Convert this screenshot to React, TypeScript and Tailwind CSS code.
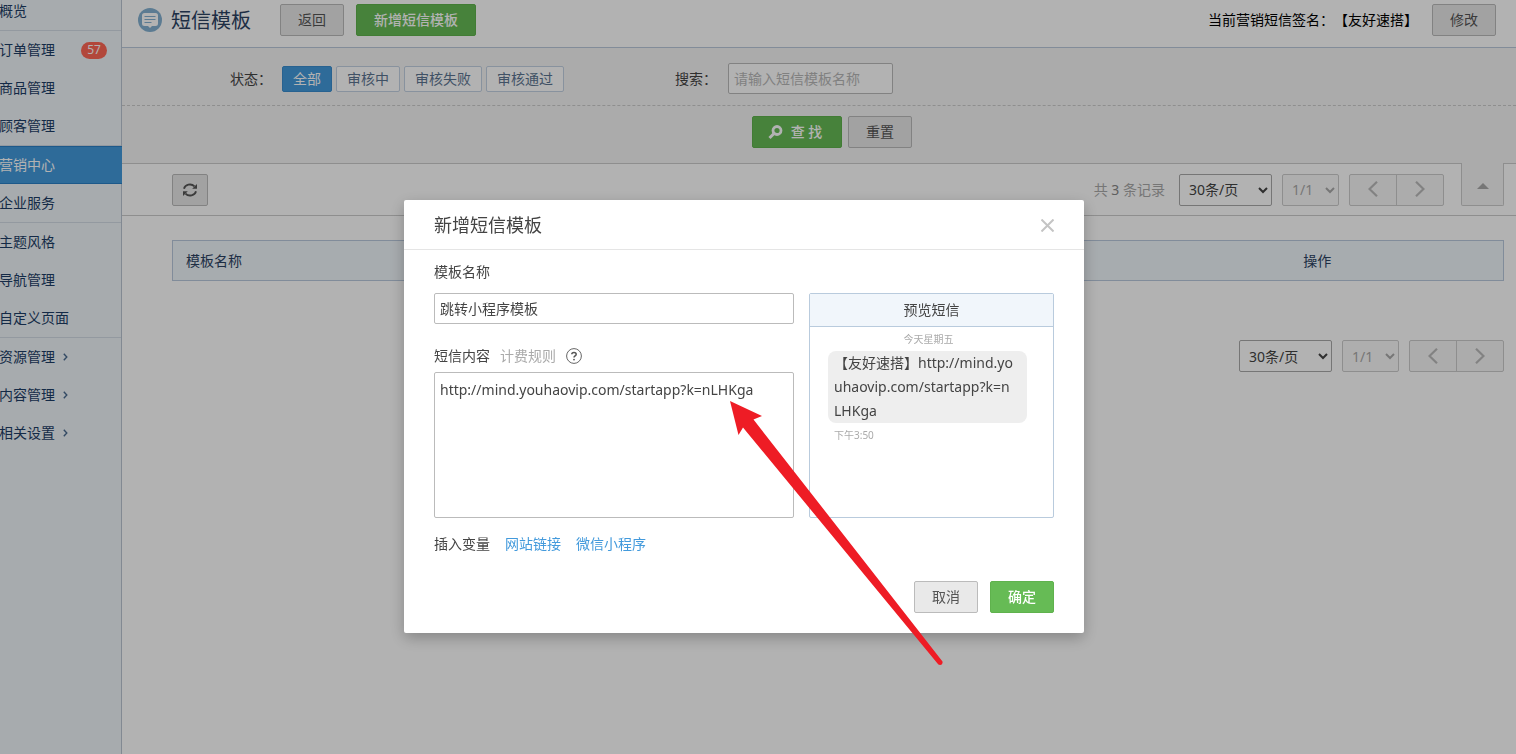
import React, { useState } from "react";
import clsx from "clsx";

const SIGNATURE = "【友好速搭】";

const MENU_GROUPS = [
  [{ label: "订单管理", badge: 57 }, { label: "商品管理" }, { label: "顾客管理" }],
  [{ label: "营销中心", active: true }, { label: "企业服务" }],
  [{ label: "主题风格" }, { label: "导航管理" }, { label: "自定义页面" }],
  [
    { label: "资源管理", more: true },
    { label: "内容管理", more: true },
    { label: "相关设置", more: true },
  ],
] as { label: string; badge?: number; active?: boolean; more?: boolean }[][];

const STATUS_LIST = ["全部", "审核中", "审核失败", "审核通过"];

const Button = ({
  children,
  primary,
  className,
}: {
  children: React.ReactNode;
  primary?: boolean;
  className?: string;
}) => (
  <button
    type="button"
    className={clsx(
      "flex h-8 items-center justify-center rounded-xs border whitespace-nowrap",
      primary
        ? "border-[#5fb24d] bg-[#66bb55] font-medium text-white"
        : "border-[#bbb] bg-[#e9e9e9] text-[#555]",
      className
    )}
  >
    {children}
  </button>
);

const Sidebar = () => (
  <nav className="-ml-px w-[123px] shrink-0 border-r border-[#bac5d2] bg-[#eff5f9] text-[#1d3d66]">
    <a href="#" className="flex h-[30px] items-center pb-2">
      概览
    </a>
    {MENU_GROUPS.map((group, index) => (
      <ul key={index} className="border-t border-[#d3dce5]">
        {group.map((item) => (
          <li key={item.label}>
            <a
              href="#"
              className={clsx(
                "flex h-[38px] items-center",
                item.active &&
                  "-mr-px border-y border-[#2a80c6] bg-[#439adc] text-white"
              )}
            >
              {item.label}
              {item.badge && (
                <span className="mr-[14px] ml-auto flex h-[17px] w-[26px] items-center justify-center rounded-full bg-[#ff6655] text-xs text-white">
                  {item.badge}
                </span>
              )}
              {item.more && (
                <svg width="5" height="8" viewBox="0 0 5 8" className="ml-2">
                  <path
                    d="M0.8 0.8L3.8 4L0.8 7.2"
                    fill="none"
                    stroke="#4a6b90"
                    strokeWidth="1.4"
                  />
                </svg>
              )}
            </a>
          </li>
        ))}
      </ul>
    ))}
  </nav>
);

const Header = () => (
  <header className="flex items-center border-b border-[#bac9dc] bg-white pt-1 pr-5 pb-[11px] pl-4">
    <svg width="24" height="24" viewBox="0 0 24 24">
      <circle cx="12" cy="12" r="12" fill="#84b1d1" />
      <path
        d="M6.5 5h11a2.5 2.5 0 0 1 2.5 2.5v8a2.5 2.5 0 0 1-2.5 2.5H14l-2 2l-2-2H6.5a2.5 2.5 0 0 1-2.5-2.5v-8A2.5 2.5 0 0 1 6.5 5z"
        fill="#fff"
      />
      <path
        d="M6.5 8.5h11M6.5 11.5h11M6.5 14.5h7"
        stroke="#84b1d1"
        strokeWidth="1"
      />
    </svg>
    <h1 className="ml-[9px] pt-0.5 text-xl text-[#2b4262]">短信模板</h1>
    <Button className="ml-[29px] w-16">返回</Button>
    <Button primary className="ml-3 w-[120px]">
      新增短信模板
    </Button>
    <span className="ml-auto text-black">{`当前营销短信签名：${SIGNATURE}`}</span>
    <Button className="ml-[14px] w-16">修改</Button>
  </header>
);

const Filters = () => {
  const [status, setStatus] = useState("全部");

  return (
    <form className="border-b border-[#ccc] bg-[#f5f5f5]">
      <div className="flex h-[58px] items-center border-b border-dashed border-[#ccc] pt-1 pl-[108px]">
        <span>状态：</span>
        <div className="ml-[10px] flex gap-1">
          {STATUS_LIST.map((name) => (
            <button
              key={name}
              type="button"
              onClick={() => setStatus(name)}
              className={clsx(
                "h-[26px] rounded-xs border px-[10px]",
                name === status
                  ? "border-[#3a8dcf] bg-[#439adc] text-white"
                  : "border-[#c3d2e2] bg-white text-[#5c7591]"
              )}
            >
              {name}
            </button>
          ))}
        </div>
        <label htmlFor="keyword" className="ml-[111px]">
          搜索：
        </label>
        <input
          id="keyword"
          type="text"
          placeholder="请输入短信模板名称"
          className="ml-[11px] h-[31px] w-[165px] rounded-xs border border-[#bbb] bg-white px-[5px] placeholder:text-[#b8b8b8]"
        />
      </div>
      <div className="flex h-[57px] items-center justify-center gap-[6px] pb-[5px] pl-[26px]">
        <Button primary className="w-[90px] gap-2 pr-1">
          <svg width="15" height="15" viewBox="0 0 15 15">
            <circle
              cx="9"
              cy="5.5"
              r="4"
              fill="none"
              stroke="#fff"
              strokeWidth="2.8"
            />
            <path d="M6 8.5L1.5 13" stroke="#fff" strokeWidth="3" />
          </svg>
          查 找
        </Button>
        <Button className="w-16">重置</Button>
      </div>
    </form>
  );
};

const Pager = () => (
  <div className="flex gap-[10px]">
    <select
      aria-label="每页条数"
      className="h-8 w-[93px] rounded-xs border border-[#aaa] bg-white px-[5px] text-[#444]"
    >
      <option>30条/页</option>
    </select>
    <select
      aria-label="页码"
      disabled
      className="h-8 w-[57px] rounded-xs border border-[#ccc] bg-[#fafafa] px-[5px] text-[#aaa]"
    >
      <option>1/1</option>
    </select>
    <div className="flex w-[95px] divide-x divide-[#ccc] rounded-xs border border-[#ccc] bg-[#f6f6f6]">
      <button
        type="button"
        aria-label="上一页"
        className="flex h-[30px] flex-1 items-center justify-center"
      >
        <svg width="10" height="17" viewBox="0 0 10 17">
          <path
            d="M9 0.8L1.5 8L9 15.2"
            fill="none"
            stroke="#bbb"
            strokeWidth="2.2"
          />
        </svg>
      </button>
      <button
        type="button"
        aria-label="下一页"
        className="flex h-[30px] flex-1 items-center justify-center"
      >
        <svg width="10" height="17" viewBox="0 0 10 17">
          <path
            d="M1 0.8L8.5 8L1 15.2"
            fill="none"
            stroke="#bbb"
            strokeWidth="2.2"
          />
        </svg>
      </button>
    </div>
  </div>
);

const Toolbar = () => (
  <div className="flex h-[52px] items-center border-b border-[#ccc] bg-white pr-3 pl-[50px]">
    <button
      type="button"
      aria-label="刷新"
      className="flex h-8 w-9 items-center justify-center rounded-xs border border-[#bbb] bg-[#e9e9e9]"
    >
      <svg width="16" height="16" viewBox="0 0 16 16">
        <path
          d="M2 6.8A6 5.2 0 0 1 12.5 4.4M14 9.2A6 5.2 0 0 1 3.5 11.6"
          fill="none"
          stroke="#555"
          strokeWidth="1.8"
        />
        <path d="M15 2V6.8H10.2zM1 14V9.2H5.8z" fill="#555" />
      </svg>
    </button>
    <span className="mr-[14px] ml-auto text-[#aaa]">
      共 <span className="text-[#888]">3</span> 条记录
    </span>
    <Pager />
    {/* tab hangs from the filter area, so it covers its bottom border */}
    <button
      type="button"
      aria-label="收起筛选"
      className="-mt-px ml-[17px] flex h-[43px] w-[43px] items-center justify-center self-start rounded-b-xs border border-t-0 border-[#ccc] bg-[#f5f5f5] pt-[3px]"
    >
      <svg width="12" height="6" viewBox="0 0 12 6">
        <path d="M0 6L6 0L12 6z" fill="#aaa" />
      </svg>
    </button>
  </div>
);

const TemplateTable = () => (
  <section className="pt-6 pr-3 pl-[50px]">
    <table className="w-full border-collapse border border-[#b9c9dd] bg-[#f0f6fb] text-[#2b4262]">
      <thead>
        <tr className="h-10">
          <th className="px-[13px] text-left font-normal">模板名称</th>
          <th className="w-[372px] font-normal">操作</th>
        </tr>
      </thead>
    </table>
    <div className="mt-[59px] flex justify-end">
      <Pager />
    </div>
  </section>
);

const TemplateDialog = () => {
  const [name, setName] = useState("跳转小程序模板");
  const [content, setContent] = useState(
    "http://mind.youhaovip.com/startapp?k=nLHKga"
  );

  return (
    <div
      role="dialog"
      aria-labelledby="dialog-title"
      className="w-[680px] rounded-xs bg-white shadow-[0_5px_15px_rgba(0,0,0,0.25)]"
    >
      <div className="flex h-[50px] items-center justify-between border-b border-[#e5e5e5] px-[30px] pt-px">
        <h2 id="dialog-title" className="text-lg">
          新增短信模板
        </h2>
        <button type="button" aria-label="关闭">
          <svg width="13" height="13" viewBox="0 0 13 13">
            <path
              d="M0.5 0.5L12.5 12.5M12.5 0.5L0.5 12.5"
              stroke="#c4c4c4"
              strokeWidth="2"
            />
          </svg>
        </button>
      </div>

      <div className="px-[30px] pt-3 pb-5">
        <label htmlFor="template-name" className="block">
          模板名称
        </label>
        <div className="mt-[11px] flex gap-[15px]">
          <div className="flex flex-1 flex-col">
            <input
              id="template-name"
              type="text"
              value={name}
              onChange={(e) => setName(e.target.value)}
              className="h-[31px] rounded-xs border border-[#bbb] px-[5px] pb-px"
            />
            <div className="mt-[22px] flex items-center">
              <label htmlFor="template-content">短信内容</label>
              <a href="#" className="ml-[10px] text-[#aaa]">
                计费规则
              </a>
              <svg width="16" height="16" viewBox="0 0 16 16" className="ml-[10px]">
                <circle cx="8" cy="8" r="7.4" fill="none" stroke="#666" />
                <path
                  d="M5.8 6.3C5.8 3.8 10.2 3.8 10.2 6.3C10.2 7.9 8 7.9 8 9.6"
                  fill="none"
                  stroke="#555"
                  strokeWidth="1.5"
                />
                <circle cx="8" cy="11.6" r="0.9" fill="#555" />
              </svg>
            </div>
            <textarea
              id="template-content"
              value={content}
              onChange={(e) => setContent(e.target.value)}
              className="mt-[6px] h-[146px] resize-none rounded-xs border border-[#bbb] px-[5px] py-[5px] leading-6"
            />
          </div>

          {/* sms preview */}
          <div className="w-[245px] rounded-xs border border-[#b9cbdd]">
            <div className="flex h-[33px] items-center justify-center border-b border-[#b9cbdd] bg-[#f1f6fb]">
              预览短信
            </div>
            <div className="px-[18px] pt-1">
              <p className="pr-[6px] text-center text-[10px] leading-4 text-[#aaa]">
                今天星期五
              </p>
              <p className="mt-1 w-[199px] rounded-lg bg-[#eee] pr-3 pl-[6px] leading-6 break-all">
                {`${SIGNATURE}${content}`}
              </p>
              <p className="mt-1 px-[6px] text-[10px] leading-4 text-[#aaa]">
                下午3:50
              </p>
            </div>
          </div>
        </div>

        <div className="mt-4 flex gap-[15px]">
          <span>插入变量</span>
          <a href="#" className="text-[#439adc]">
            网站链接
          </a>
          <a href="#" className="text-[#439adc]">
            微信小程序
          </a>
        </div>

        <div className="mt-[27px] flex justify-end gap-3">
          <Button className="w-16">取消</Button>
          <Button primary className="w-16">
            确定
          </Button>
        </div>
      </div>
    </div>
  );
};

const App = () => {
  return (
    <div className="relative flex min-h-screen bg-white font-['Noto_Sans','Noto_Sans_CJK_SC',sans-serif] text-sm text-[#444] [text-spacing-trim:space-all]">
      <Sidebar />
      <main className="min-w-0 flex-1">
        <Header />
        <Filters />
        <Toolbar />
        <TemplateTable />
      </main>

      <div className="fixed inset-0 flex items-start justify-center bg-black/30 pt-[200px] pr-7">
        <div className="relative">
          <TemplateDialog />
          {/* arrow that points at the mini program link */}
          <svg
            width="216"
            height="266"
            viewBox="0 0 216 266"
            className="pointer-events-none absolute top-[200px] left-[325px]"
          >
            <path
              d="M1 1L33 16L24.5 19.5L213.5 261.5Q214 264.5 211.5 265Q209.5 265 208.5 263.5L14 27.5L9.5 35z"
              fill="#ee1c25"
            />
          </svg>
        </div>
      </div>
    </div>
  );
};

export default App;
